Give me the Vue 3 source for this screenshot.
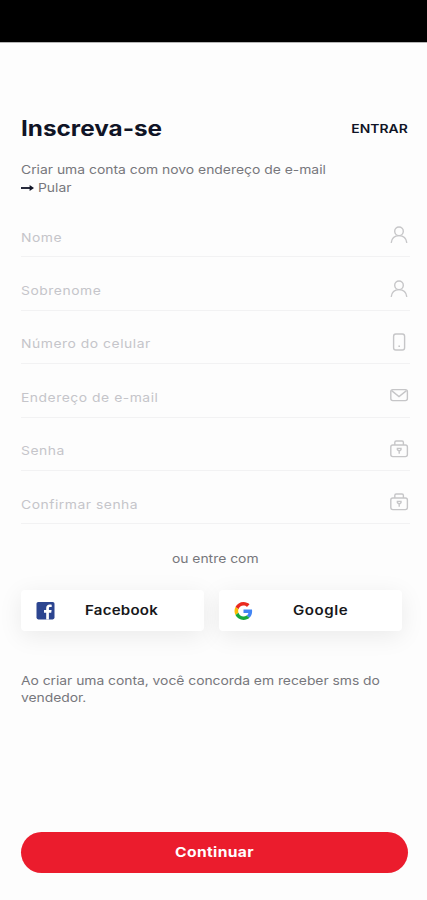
<template>
  <div class="screen">
    <div class="status-bar"></div>

    <main class="content">
      <header class="header">
        <h1 class="title">Inscreva-se</h1>
        <a class="login-link" @click="$emit('login')">ENTRAR</a>
      </header>

      <p class="subtitle">Criar uma conta com novo endereço de e-mail</p>
      <a class="skip" @click="$emit('skip')">
        <svg class="skip-arrow" viewBox="0 0 13 8">
          <path d="M0 4h10" stroke="currentColor" stroke-width="1.8" />
          <path d="M8.6 1 13 4 8.6 7z" fill="currentColor" />
        </svg>
        <span class="skip-text">Pular</span>
      </a>

      <form class="form" @submit.prevent>
        <label v-for="field in fields" :key="field.name" class="field">
          <input
            v-model="form[field.name]"
            class="input"
            :type="field.type"
            :placeholder="field.label"
          />
          <svg class="field-icon" viewBox="0 0 20 20">
            <template v-if="field.icon === 'user'">
              <circle cx="10" cy="6.3" r="4.3" />
              <path d="M2.2 17.8c.5-4.4 3.6-7.2 7.8-7.2s7.3 2.8 7.8 7.2" />
            </template>
            <template v-else-if="field.icon === 'phone'">
              <rect x="4.6" y="2" width="11" height="16" rx="2.2" />
              <path d="M9.4 14.2h1.6" />
            </template>
            <template v-else-if="field.icon === 'mail'">
              <rect x="1.8" y="4.6" width="16.6" height="11" rx="2" />
              <path d="M2.6 5.6 10 11.6l7.5-6" />
            </template>
            <template v-else>
              <rect x="1.8" y="6" width="16.6" height="11.6" rx="2" />
              <path d="M5.8 6V3.4c0-.9.5-1.4 1.4-1.4h5.8c.9 0 1.4.5 1.4 1.4V6" />
              <path d="M8.4 9.4h3.6v1.2l-1.8 1.6-1.8-1.6zM10.2 12v2.8" />
            </template>
          </svg>
        </label>
      </form>

      <p class="divider">ou entre com</p>

      <div class="social">
        <button class="social-btn">
          <svg class="social-icon" viewBox="0 0 18 18">
            <rect width="18" height="17.4" rx="1.8" fill="#2c4590" />
            <path
              d="M9.7 17.4v-6.7H7.5V8h2.2V6.1c0-2.3 1.4-3.5 3.5-3.5.9 0 1.7.1 2 .1v2.4h-1.4c-1.1 0-1.4.5-1.4 1.3V8h2.7l-.4 2.7h-2.3v6.7z"
              fill="#fff"
            />
          </svg>
          <span class="social-name facebook">Facebook</span>
        </button>
        <button class="social-btn">
          <svg class="social-icon" viewBox="0 0 48 48">
            <path fill="#ea2a1f" d="M24 9.5c3.54 0 6.71 1.22 9.21 3.6l6.85-6.85C35.9 2.38 30.47 0 24 0 14.62 0 6.51 5.38 2.56 13.22l7.98 6.19C12.43 13.72 17.74 9.5 24 9.5z" />
            <path fill="#4285f4" d="M46.98 24.55c0-1.57-.15-3.09-.38-4.55H24v9.02h12.94c-.58 2.96-2.26 5.48-4.78 7.18l7.73 6c4.51-4.18 7.09-10.36 7.09-17.65z" />
            <path fill="#fbbc05" d="M10.53 28.59c-.48-1.45-.76-2.99-.76-4.59s.27-3.14.76-4.59l-7.98-6.19C.92 16.46 0 20.12 0 24c0 3.88.92 7.54 2.56 10.78l7.97-6.19z" />
            <path fill="#16a83c" d="M24 48c6.48 0 11.93-2.13 15.89-5.81l-7.73-6c-2.15 1.45-4.92 2.3-8.16 2.3-6.26 0-11.57-4.22-13.47-9.91l-7.98 6.19C6.51 42.62 14.62 48 24 48z" />
          </svg>
          <span class="social-name google">Google</span>
        </button>
      </div>

      <p class="terms">
        Ao criar uma conta, você concorda em receber sms do<br />
        vendedor.
      </p>

      <button class="submit"><span class="submit-text">Continuar</span></button>
    </main>
  </div>
</template>

<script setup>
import { reactive } from 'vue'

defineEmits(['login', 'skip'])

const fields = [
  { name: 'nome', label: 'Nome', type: 'text', icon: 'user' },
  { name: 'sobrenome', label: 'Sobrenome', type: 'text', icon: 'user' },
  { name: 'celular', label: 'Número do celular', type: 'tel', icon: 'phone' },
  { name: 'email', label: 'Endereço de e-mail', type: 'email', icon: 'mail' },
  { name: 'senha', label: 'Senha', type: 'password', icon: 'lock' },
  { name: 'confirmar', label: 'Confirmar senha', type: 'password', icon: 'lock' }
]

const form = reactive({
  nome: '',
  sobrenome: '',
  celular: '',
  email: '',
  senha: '',
  confirmar: ''
})
</script>

<style>
body {
  background: #fdfdfd;
}
</style>

<style scoped>
.screen {
  display: flex;
  flex-direction: column;
  height: 900px;
  background: #fdfdfd;
  font-family: Inter, 'Open Sans', sans-serif;
  color: #101426;
}

.status-bar {
  flex-shrink: 0;
  height: 42px;
  background: #000;
  border-bottom: 1px solid #b5b5b5;
}

.content {
  flex: 1;
  display: flex;
  flex-direction: column;
  padding: 70px 15px 27px 21px;
}

/* wide lettering */
.title,
.subtitle,
.skip-text,
.input,
.social-name,
.terms {
  transform: scaleX(1.157);
  transform-origin: left center;
}

.login-link {
  transform: scaleX(1.157);
  transform-origin: right center;
}

.divider,
.submit-text {
  transform: scaleX(1.157);
}

.header {
  display: flex;
  align-items: center;
  justify-content: space-between;
  height: 30px;
  padding-right: 4px;
}

.title {
  margin: 0;
  font-size: 21px;
  font-weight: 700;
}

.login-link {
  padding-top: 1px;
  font-size: 12px;
  font-weight: 600;
  cursor: pointer;
}

.subtitle {
  align-self: flex-start;
  margin: 18px 0 0;
  font-size: 12px;
  line-height: 18px;
  white-space: nowrap;
  color: #77777c;
}

.skip {
  display: flex;
  align-items: center;
  gap: 4px;
  height: 17px;
  cursor: pointer;
}

.skip-arrow {
  width: 13px;
  height: 8px;
}

.skip-text {
  font-size: 12px;
  color: #77777c;
}

.form {
  display: flex;
  flex-direction: column;
  margin: 8px 2px 0 0;
}

.field {
  display: flex;
  align-items: center;
  justify-content: space-between;
  height: 53.4px;
  padding: 13px 1px 0 0;
  box-sizing: border-box;
  border-bottom: 1px solid #f2f2f3;
}

.input {
  width: 300px;
  padding: 1px 0 0;
  border: none;
  outline: none;
  background: transparent;
  font-family: inherit;
  font-size: 12px;
  letter-spacing: 0.45px;
  color: #101426;
}

.input::placeholder {
  color: #c5c5ca;
  opacity: 1;
}

.field-icon {
  width: 20px;
  height: 20px;
  margin-bottom: 3px;
  fill: none;
  stroke: #c6c6c8;
  stroke-width: 1.4;
}

.divider {
  align-self: center;
  margin: 26px 0 0;
  padding-right: 3px;
  font-size: 12px;
  line-height: 18px;
  color: #77777c;
}

.social {
  display: flex;
  gap: 15px;
  margin-top: 22px;
}

.social-btn {
  display: flex;
  align-items: center;
  width: 183px;
  height: 41px;
  padding: 0 15px;
  border: none;
  border-radius: 4px;
  background: #fff;
  box-shadow: 0 5px 24px rgba(0, 0, 0, 0.08);
  font-family: inherit;
  color: #17171a;
  cursor: pointer;
}

.social-icon {
  flex-shrink: 0;
  width: 19px;
  height: 18px;
}

.social-name {
  padding-bottom: 2px;
  font-size: 13px;
  font-weight: 600;
  letter-spacing: 0.2px;
}

.facebook {
  margin-left: 30px;
}

.google {
  margin-left: 40px;
  letter-spacing: 0.5px;
}

.terms {
  align-self: flex-start;
  margin: 42px 0 0;
  font-size: 12px;
  line-height: 16.5px;
  letter-spacing: -0.03px;
  white-space: nowrap;
  color: #77777c;
}

.submit {
  width: 387px;
  height: 41px;
  margin-top: auto;
  border: none;
  border-radius: 21px;
  background: #eb1c2d;
  font-family: inherit;
  font-size: 13.5px;
  font-weight: 700;
  letter-spacing: 0.3px;
  color: #fff;
  cursor: pointer;
}

.submit-text {
  display: block;
  padding-bottom: 2px;
}
</style>
